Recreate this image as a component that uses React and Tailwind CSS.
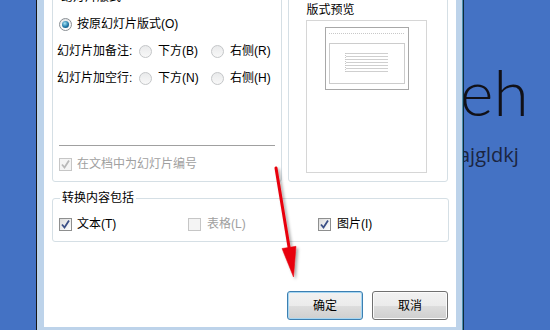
import React from 'react';

const font = { fontFamily: '"Liberation Sans", "Noto Sans CJK SC", sans-serif' };

function Radio({ checked }) {
  return (
    <span
      className={
        'inline-flex h-[13px] w-[13px] shrink-0 items-center justify-center rounded-full border ' +
        (checked
          ? 'border-[#8a8f94] bg-[linear-gradient(180deg,#e4e6e8,#ffffff)]'
          : 'border-[#c4c6c8] bg-[linear-gradient(180deg,#e9eaeb,#f8f8f8)]')
      }
    >
      {checked && (
        <span className="h-[7px] w-[7px] rounded-full bg-[radial-gradient(circle_at_40%_35%,#a6e4f6,#1f78a8_55%,#0b3f68)]" />
      )}
    </span>
  );
}

function Check({ checked, disabled }) {
  return (
    <span
      className={
        'inline-flex h-[13px] w-[13px] shrink-0 items-center justify-center border ' +
        (disabled
          ? 'border-[#c6c6c6] bg-[#f4f4f4]'
          : 'border-[#8e8f8f] bg-[linear-gradient(135deg,#dcdcdc,#ffffff)]')
      }
    >
      {checked && (
        <svg width="11" height="11" viewBox="0 0 11 11">
          <path
            d="M2 5.5 L4.5 8.5 L9 1.5"
            fill="none"
            stroke={disabled ? '#b8b8b8' : '#3b4f86'}
            strokeWidth="1.8"
          />
        </svg>
      )}
    </span>
  );
}

function Button({ label, focused }) {
  return (
    <button
      className={
        'h-[29px] w-[76px] rounded-[3px] border text-[12px] text-black bg-[linear-gradient(180deg,#f2f2f2_0%,#ebebeb_50%,#dddddd_51%,#cfcfcf_100%)] ' +
        (focused ? 'border-[#3c7fb1] shadow-[inset_0_0_0_1px_#a6d6f2]' : 'border-[#707070] shadow-[inset_0_0_0_1px_#fbfbfb]')
      }
    >
      {label}
    </button>
  );
}

function PreviewThumb() {
  return (
    <div className="mx-auto mt-[6px] h-[63px] w-[84px] border border-[#a8a8a8] bg-white">
      <div className="ml-[3px] mt-[5px] w-[75px] border-t border-dotted border-[#c8c8c8]" />
      <div className="ml-[3px] mt-[9px] h-[41px] w-[76px] border border-[#cccccc]">
        <div className="ml-[15px] mt-[9px] flex w-[42px] flex-col gap-[2px] border-l border-dotted border-[#c8c8c8]">
          {[0, 1, 2, 3, 4, 5, 6].map((i) => (
            <div key={i} className="h-[1px] w-[42px] bg-[#cfcfcf]" />
          ))}
        </div>
      </div>
    </div>
  );
}

export default function App() {
  return (
    <div className="relative flex h-[330px] w-[550px] overflow-hidden bg-[#4472c4] text-[12px] leading-[14px] text-black" style={font}>
      <div className="w-[36px] shrink-0" />

      {/* dialog window frame */}
      <div className="flex h-[330px] w-[428px] shrink-0 flex-col border-l border-r border-l-[#161616] border-r-[#0e2c3c] bg-[#bdd3ea] pl-[7px] pr-[6px] shadow-[inset_-1px_0_0_#4d8fae]">
        <div className="h-[327px] w-[412px] overflow-hidden bg-white">
          <div className="-mt-[3px] flex flex-col px-[8px]">
            {/* top row */}
            <div className="flex h-[185px] gap-[6px]">
              <div className="relative h-[185px] w-[231px] rounded-[3px] border border-[#d5dfe5]">
                <span className="absolute -top-[8px] left-[6px] bg-white px-[2px]">幻灯片版式</span>
                <div className="ml-[6px] mt-[19px] flex h-[14px] items-center">
                  <Radio checked />
                  <span className="ml-[5px]">按原幻灯片版式(O)</span>
                </div>
                <div className="ml-[4px] mt-[13px] flex h-[14px] items-center">
                  <span className="w-[82px]">幻灯片加备注:</span>
                  <Radio />
                  <span className="ml-[6px] w-[53px]">下方(B)</span>
                  <Radio />
                  <span className="ml-[6px]">右侧(R)</span>
                </div>
                <div className="ml-[4px] mt-[13px] flex h-[14px] items-center">
                  <span className="w-[82px]">幻灯片加空行:</span>
                  <Radio />
                  <span className="ml-[6px] w-[53px]">下方(N)</span>
                  <Radio />
                  <span className="ml-[6px]">右侧(H)</span>
                </div>
                <div className="mx-[6px] mt-[60px] h-[1px] bg-[#a0a0a0]" />
                <div className="ml-[6px] mt-[11px] flex h-[14px] items-center text-[#a0a0a0]">
                  <Check checked disabled />
                  <span className="ml-[5px]">在文档中为幻灯片编号</span>
                </div>
              </div>

              <div className="h-[185px] w-[160px] rounded-[3px] border border-[#d5dfe5]">
                <div className="ml-[17px] mt-[5px] h-[14px]">版式预览</div>
                <div className="ml-[17px] mt-[3px] h-[153px] w-[121px] border border-[#d6d6d6]">
                  <PreviewThumb />
                </div>
              </div>
            </div>

            {/* content group */}
            <div className="relative mt-[16px] h-[44px] w-[397px] rounded-[3px] border border-[#d5dfe5]">
              <span className="absolute -top-[8px] left-[7px] bg-white px-[2px]">转换内容包括</span>
              <div className="ml-[6px] mt-[18px] flex h-[14px] items-center">
                <div className="flex w-[129px] items-center">
                  <Check checked />
                  <span className="ml-[5px]">文本(T)</span>
                </div>
                <div className="flex w-[130px] items-center text-[#a0a0a0]">
                  <Check disabled />
                  <span className="ml-[6px]">表格(L)</span>
                </div>
                <div className="flex items-center">
                  <Check checked />
                  <span className="ml-[6px]">图片(I)</span>
                </div>
              </div>
            </div>

            {/* buttons */}
            <div className="mt-[49px] flex justify-end gap-[9px]">
              <Button label="确定" focused />
              <Button label="取消" />
            </div>
          </div>
        </div>
      </div>

      {/* slide behind the dialog */}
      <div className="flex-1 overflow-hidden">
        <div
          className="-ml-[4px] mt-[60px] h-[64px] text-[64px] font-light leading-[64px] text-[#111118]"
          style={{ fontFamily: 'Lato, "Open Sans", sans-serif' }}
        >
          eh
        </div>
        <div
          className="-ml-[5px] mt-[20px] h-[22px] text-[20px] leading-[22px] text-[#1b2540]"
          style={{ fontFamily: '"Open Sans", Lato, sans-serif' }}
        >
          ajgldkj
        </div>
      </div>

      {/* red annotation arrow */}
      <svg className="pointer-events-none absolute left-0 top-0" width="550" height="330" viewBox="0 0 550 330">
        <defs>
          <filter id="sh" x="-50%" y="-50%" width="200%" height="200%">
            <feDropShadow dx="2" dy="2" stdDeviation="1.5" floodColor="#000" floodOpacity="0.35" />
          </filter>
        </defs>
        <g filter="url(#sh)" fill="#e8000b" stroke="#e8000b">
          <line x1="276" y1="168" x2="289.5" y2="250" strokeWidth="3" strokeLinecap="round" />
          <polygon points="282,248.5 296,246.3 293.5,277" strokeWidth="0.5" />
        </g>
      </svg>
    </div>
  );
}
